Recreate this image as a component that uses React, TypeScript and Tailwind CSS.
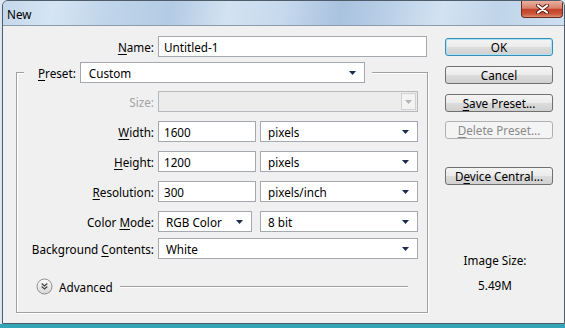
import React from "react";

function Arrow({ disabled }: { disabled?: boolean }) {
  return (
    <svg width="7" height="4" viewBox="0 0 7 4" className="shrink-0">
      <path d="M0 0H7L3.5 4Z" fill={disabled ? "#b4b4b4" : "#1b2c4f"} />
    </svg>
  );
}

function U({ children }: { children: React.ReactNode }) {
  return <span className="underline decoration-1 underline-offset-[2px]">{children}</span>;
}

function Btn({
  children,
  variant,
  className,
}: {
  children: React.ReactNode;
  variant?: "ok" | "disabled";
  className?: string;
}) {
  const base =
    "h-[18px] w-[108px] rounded-[3px] flex items-center justify-center leading-[16px] ";
  let v =
    "border border-[#707070] bg-[linear-gradient(#f4f4f4_0%,#ebebeb_50%,#dcdcdc_51%,#d0d0d0_100%)] text-black";
  if (variant === "ok")
    v =
      "border border-[#3c8db4] shadow-[inset_0_0_0_1px_#a6e4f7] bg-[linear-gradient(#f4f4f4_0%,#ebebeb_50%,#dcdcdc_51%,#d0d0d0_100%)] text-black";
  if (variant === "disabled") v = "border border-[#adb2b5] bg-[#f4f4f4] text-[#8a8a8a]";
  return <div className={base + v + " " + (className ?? "")}>{children}</div>;
}

function Row({
  label,
  children,
  className,
  disabled,
}: {
  label: React.ReactNode;
  children: React.ReactNode;
  className?: string;
  disabled?: boolean;
}) {
  return (
    <div className={"flex items-center h-[21px] " + (className ?? "")}>
      <div className={"w-[137px] text-right leading-[16px] " + (disabled ? "text-[#a3a3a3]" : "")}>{label}</div>
      <div className="ml-[4px] flex gap-[4px]">{children}</div>
    </div>
  );
}

function Field({ text, className }: { text: string; className: string }) {
  return (
    <div className={"h-[21px] bg-white border border-[#a4a9b0] flex items-center pl-[5px] leading-[16px] " + className}>
      {text}
    </div>
  );
}

function Sel({ text, className }: { text: string; className: string }) {
  return (
    <div
      className={
        "h-[21px] bg-white border border-[#a4a9b0] flex items-center justify-between pl-[7px] pr-[8px] leading-[16px] " +
        className
      }
    >
      <span>{text}</span>
      <Arrow />
    </div>
  );
}

export default function App() {
  return (
    <div className="w-[565px] h-[328px] bg-[#dbe6f1] flex flex-col overflow-hidden font-['Noto_Sans',sans-serif] text-[11.7px] text-black">
      <div className="ml-[2px] w-[563px] h-[324px] flex flex-col border border-[#4f5c69] rounded-t-[6px] overflow-hidden bg-[#c9dbee]">
        {/* title bar */}
        <div className="h-[24px] shrink-0 flex items-start justify-between bg-[linear-gradient(100deg,#c3d7ec_0%,#d6e5f3_9%,#c1d6eb_18%,#b3cbe4_30%,#d3e2f2_40%,#c6d9ed_50%,#a9c2de_60%,#b9cfe7_68%,#d3e2f2_78%,#c0d5ea_88%,#cddff0_100%)]">
          <span className="ml-[4px] mt-[5px] leading-[16px]">New</span>
          <div className="mr-[1px] w-[42px] h-[17px] rounded-b-[4px] border border-t-0 border-[#6d2b20] bg-[linear-gradient(#eab0a0_0%,#d9816a_45%,#c3422a_52%,#c9553a_80%,#e08e70_100%)] flex items-center justify-center">
            <svg width="13" height="10" viewBox="0 0 13 10">
              <path d="M2 1.5L11 8.5M11 1.5L2 8.5" stroke="#5a1e12" strokeWidth="4" strokeLinecap="round" />
              <path d="M2 1.5L11 8.5M11 1.5L2 8.5" stroke="#ffffff" strokeWidth="2.2" strokeLinecap="round" />
            </svg>
          </div>
        </div>

        {/* client */}
        <div className="flex-1 border-t border-[#8d9cab] bg-[#f0f0f0] flex">
          {/* left */}
          <div className="pl-[13px] pt-[10px] flex flex-col">
            <div className="flex items-center h-[21px]">
              <div className="w-[138px] text-right leading-[16px]">
                <U>N</U>ame:
              </div>
              <Field text="Untitled-1" className="ml-[4px] w-[269px]" />
            </div>

            <fieldset className="mt-[5px] w-[412px] border border-[#a0a0a0] shadow-[1px_1px_0_#ffffff,inset_1px_1px_0_#ffffff] pb-[17px]">
              <legend className="ml-[7px] pl-[14px] pr-[7px] bg-[#f0f0f0]">
                <div className="flex items-center h-[21px]">
                  <span className="leading-[16px]">
                    <U>P</U>reset:
                  </span>
                  <Sel text="Custom" className="ml-[4px] w-[285px] pl-[8px]" />
                </div>
              </legend>

              <Row label="Size:" disabled className="mt-[8px]">
                <div className="w-[260px] h-[21px] border border-[#b5b9be] bg-[#ececec] flex items-center justify-end pr-[1px]">
                  <div className="w-[15px] h-[17px] border border-[#d0d0d0] bg-[#f3f3f3] flex items-center justify-center">
                    <Arrow disabled />
                  </div>
                </div>
              </Row>
              <Row label={<><U>W</U>idth:</>} className="mt-[9px]">
                <Field text="1600" className="w-[98px]" />
                <Sel text="pixels" className="w-[158px]" />
              </Row>
              <Row label={<><U>H</U>eight:</>} className="mt-[9px]">
                <Field text="1200" className="w-[98px]" />
                <Sel text="pixels" className="w-[158px]" />
              </Row>
              <Row label={<><U>R</U>esolution:</>} className="mt-[9px]">
                <Field text="300" className="w-[98px]" />
                <Sel text="pixels/inch" className="w-[158px]" />
              </Row>
              <Row label={<>Color <U>M</U>ode:</>} className="mt-[9px]">
                <Sel text="RGB Color" className="w-[94px] mr-[4px]" />
                <Sel text="8 bit" className="w-[158px]" />
              </Row>
              <Row label={<>Background <U>C</U>ontents:</>} className="mt-[6px]">
                <Sel text="White" className="w-[260px]" />
              </Row>

              <div className="mt-[19px] h-[17px] flex items-center pl-[19px] pr-[19px]">
                <svg width="17" height="17" viewBox="0 0 17 17" className="shrink-0">
                  <defs>
                    <linearGradient id="ag" x1="0" y1="0" x2="0" y2="1">
                      <stop offset="0" stopColor="#ffffff" />
                      <stop offset="1" stopColor="#d6d6d6" />
                    </linearGradient>
                  </defs>
                  <circle cx="8.5" cy="8.5" r="7.5" fill="url(#ag)" stroke="#8c8c8c" />
                  <path d="M5.7 5.6L8.5 7.9L11.3 5.6M5.7 8.6L8.5 10.9L11.3 8.6" fill="none" stroke="#444444" strokeWidth="1.3" />
                </svg>
                <span className="ml-[6px] leading-[16px]">Advanced</span>
                <div className="ml-[7px] flex-1 h-[2px] border-t border-[#a0a0a0] border-b border-b-[#ffffff]" />
              </div>
            </fieldset>
          </div>

          {/* right */}
          <div className="ml-[17px] pt-[12px] w-[108px] flex flex-col">
            <Btn variant="ok">OK</Btn>
            <Btn className="mt-[10px]">Cancel</Btn>
            <Btn className="mt-[10px]">
              <span>
                <U>S</U>ave Preset...
              </span>
            </Btn>
            <Btn variant="disabled" className="mt-[9px]">
              <span>
                <U>D</U>elete Preset...
              </span>
            </Btn>
            <Btn className="mt-[28px]">
              <span>
                D<U>e</U>vice Central...
              </span>
            </Btn>
            <div className="mt-[67px] pr-[8px] text-center leading-[16px]">Image Size:</div>
            <div className="mt-[9px] pr-[8px] text-center leading-[16px]">5.49M</div>
          </div>
        </div>
      </div>
      <div className="h-[4px] bg-[#34a5b7]" />
    </div>
  );
}
